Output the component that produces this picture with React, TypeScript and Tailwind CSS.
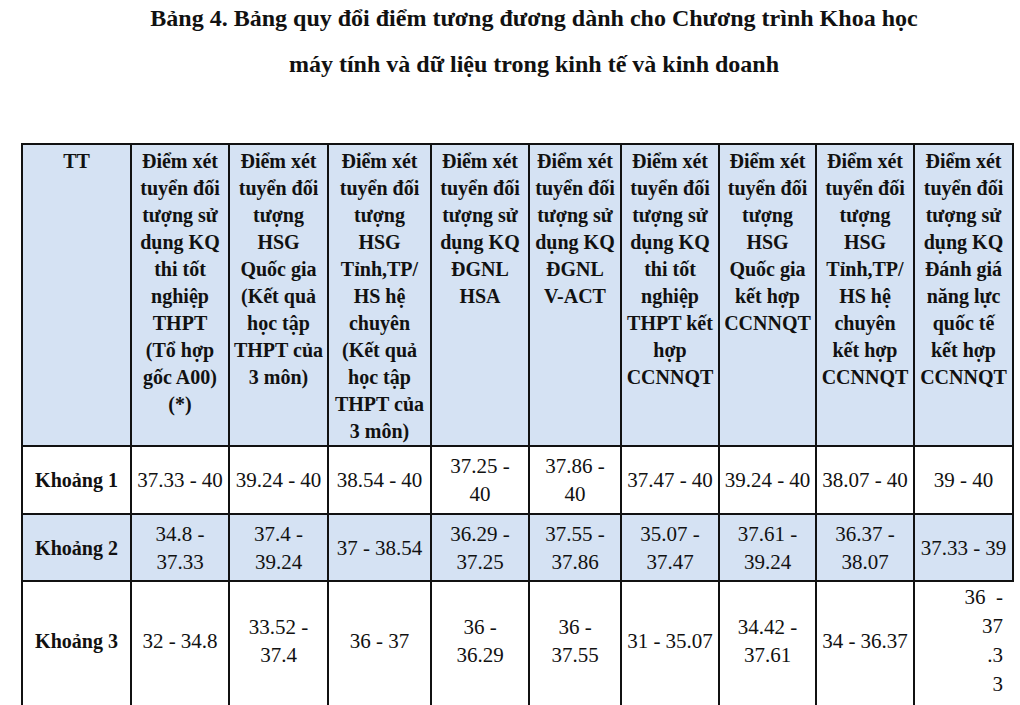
const headers: string[][] = [
  ["TT"],
  ["Điểm xét", "tuyển đối", "tượng sử", "dụng KQ", "thi tốt", "nghiệp", "THPT", "(Tổ hợp", "gốc A00)", "(*)"],
  ["Điểm xét", "tuyển đối", "tượng", "HSG", "Quốc gia", "(Kết quả", "học tập", "THPT của", "3 môn)"],
  ["Điểm xét", "tuyển đối", "tượng", "HSG", "Tỉnh,TP/", "HS hệ", "chuyên", "(Kết quả", "học tập", "THPT của", "3 môn)"],
  ["Điểm xét", "tuyển đối", "tượng sử", "dụng KQ", "ĐGNL", "HSA"],
  ["Điểm xét", "tuyển đối", "tượng sử", "dụng KQ", "ĐGNL", "V-ACT"],
  ["Điểm xét", "tuyển đối", "tượng sử", "dụng KQ", "thi tốt", "nghiệp", "THPT kết", "hợp", "CCNNQT"],
  ["Điểm xét", "tuyển đối", "tượng", "HSG", "Quốc gia", "kết hợp", "CCNNQT"],
  ["Điểm xét", "tuyển đối", "tượng", "HSG", "Tỉnh,TP/", "HS hệ", "chuyên", "kết hợp", "CCNNQT"],
  ["Điểm xét", "tuyển đối", "tượng sử", "dụng KQ", "Đánh giá", "năng lực", "quốc tế", "kết hợp", "CCNNQT"],
];

const widths = [109, 98, 99, 103, 98, 92, 98, 97, 98, 99];

type Row = { label: string; blue: boolean; h: string; pad: string; cells: string[][] };

const rows: Row[] = [
  {
    label: "Khoảng 1",
    blue: false,
    h: "h-[68px]",
    pad: "pb-0",
    cells: [
      ["37.33 - 40"],
      ["39.24 - 40"],
      ["38.54 - 40"],
      ["37.25 -", "40"],
      ["37.86 -", "40"],
      ["37.47 - 40"],
      ["39.24 - 40"],
      ["38.07 - 40"],
      ["39 - 40"],
    ],
  },
  {
    label: "Khoảng 2",
    blue: true,
    h: "h-[67px]",
    pad: "pb-0",
    cells: [
      ["34.8 -", "37.33"],
      ["37.4 -", "39.24"],
      ["37 - 38.54"],
      ["36.29 -", "37.25"],
      ["37.55 -", "37.86"],
      ["35.07 -", "37.47"],
      ["37.61 -", "39.24"],
      ["36.37 -", "38.07"],
      ["37.33 - 39"],
    ],
  },
  {
    label: "Khoảng 3",
    blue: false,
    h: "h-[128px]",
    pad: "pb-[8px]",
    cells: [
      ["32 - 34.8"],
      ["33.52 -", "37.4"],
      ["36 - 37"],
      ["36 -", "36.29"],
      ["36 -", "37.55"],
      ["31 - 35.07"],
      ["34.42 -", "37.61"],
      ["34 - 36.37"],
    ],
  },
];

const serif = '"Liberation Serif", "Times New Roman", Tinos, serif';

function Lines({ lines }: { lines: string[] }) {
  return (
    <>
      {lines.map((l, i) => (
        <div key={i} className="whitespace-nowrap">
          {l}
        </div>
      ))}
    </>
  );
}

export default function App() {
  return (
    <div className="h-[705px] w-[1020px] overflow-hidden bg-white text-[#111]" style={{ fontFamily: serif }}>
      <div className="-mt-[5px] pl-[48px] text-center text-[24px] font-bold leading-[46px]">
        <div>Bảng 4. Bảng quy đổi điểm tương đương dành cho Chương trình Khoa học</div>
        <div>máy tính và dữ liệu trong kinh tế và kinh doanh</div>
      </div>

      <table className="ml-[21px] mt-[56px] w-[991px] table-fixed border-collapse" style={{ fontFamily: serif }}>
        <colgroup>
          {widths.map((w, i) => (
            <col key={i} style={{ width: w }} />
          ))}
        </colgroup>
        <thead>
          <tr className="h-[302px] bg-[#d5e2f3]">
            {headers.map((h, i) => (
              <th
                key={i}
                className="border-2 border-[#111] px-[2px] pt-[3px] align-top text-[20px] font-bold leading-[27px]"
              >
                <Lines lines={h} />
              </th>
            ))}
          </tr>
        </thead>
        <tbody>
          {rows.map((r) => (
            <tr key={r.label} className={`${r.h} ${r.blue ? "bg-[#d5e2f3]" : "bg-white"}`}>
              <td
                className={`border-2 border-[#111] px-[2px] text-center align-middle text-[20px] font-bold leading-[28px] ${r.pad}`}
              >
                {r.label}
              </td>
              {r.cells.map((c, i) => (
                <td
                  key={i}
                  className={`border-2 border-[#111] px-[2px] text-center align-middle text-[21px] font-normal leading-[28px] ${r.pad}`}
                  style={{ fontFamily: serif }}
                >
                  <Lines lines={c} />
                </td>
              ))}
              {r.label === "Khoảng 3" ? (
                <td
                  className="border-2 border-r-0 border-[#111] pb-[8px] pr-[10px] text-right align-middle text-[21px] leading-[29px]"
                  style={{ fontFamily: serif }}
                >
                  <div className="whitespace-pre">36  -</div>
                  <div>37</div>
                  <div>.3</div>
                  <div>3</div>
                </td>
              ) : null}
            </tr>
          ))}
        </tbody>
      </table>
    </div>
  );
}
